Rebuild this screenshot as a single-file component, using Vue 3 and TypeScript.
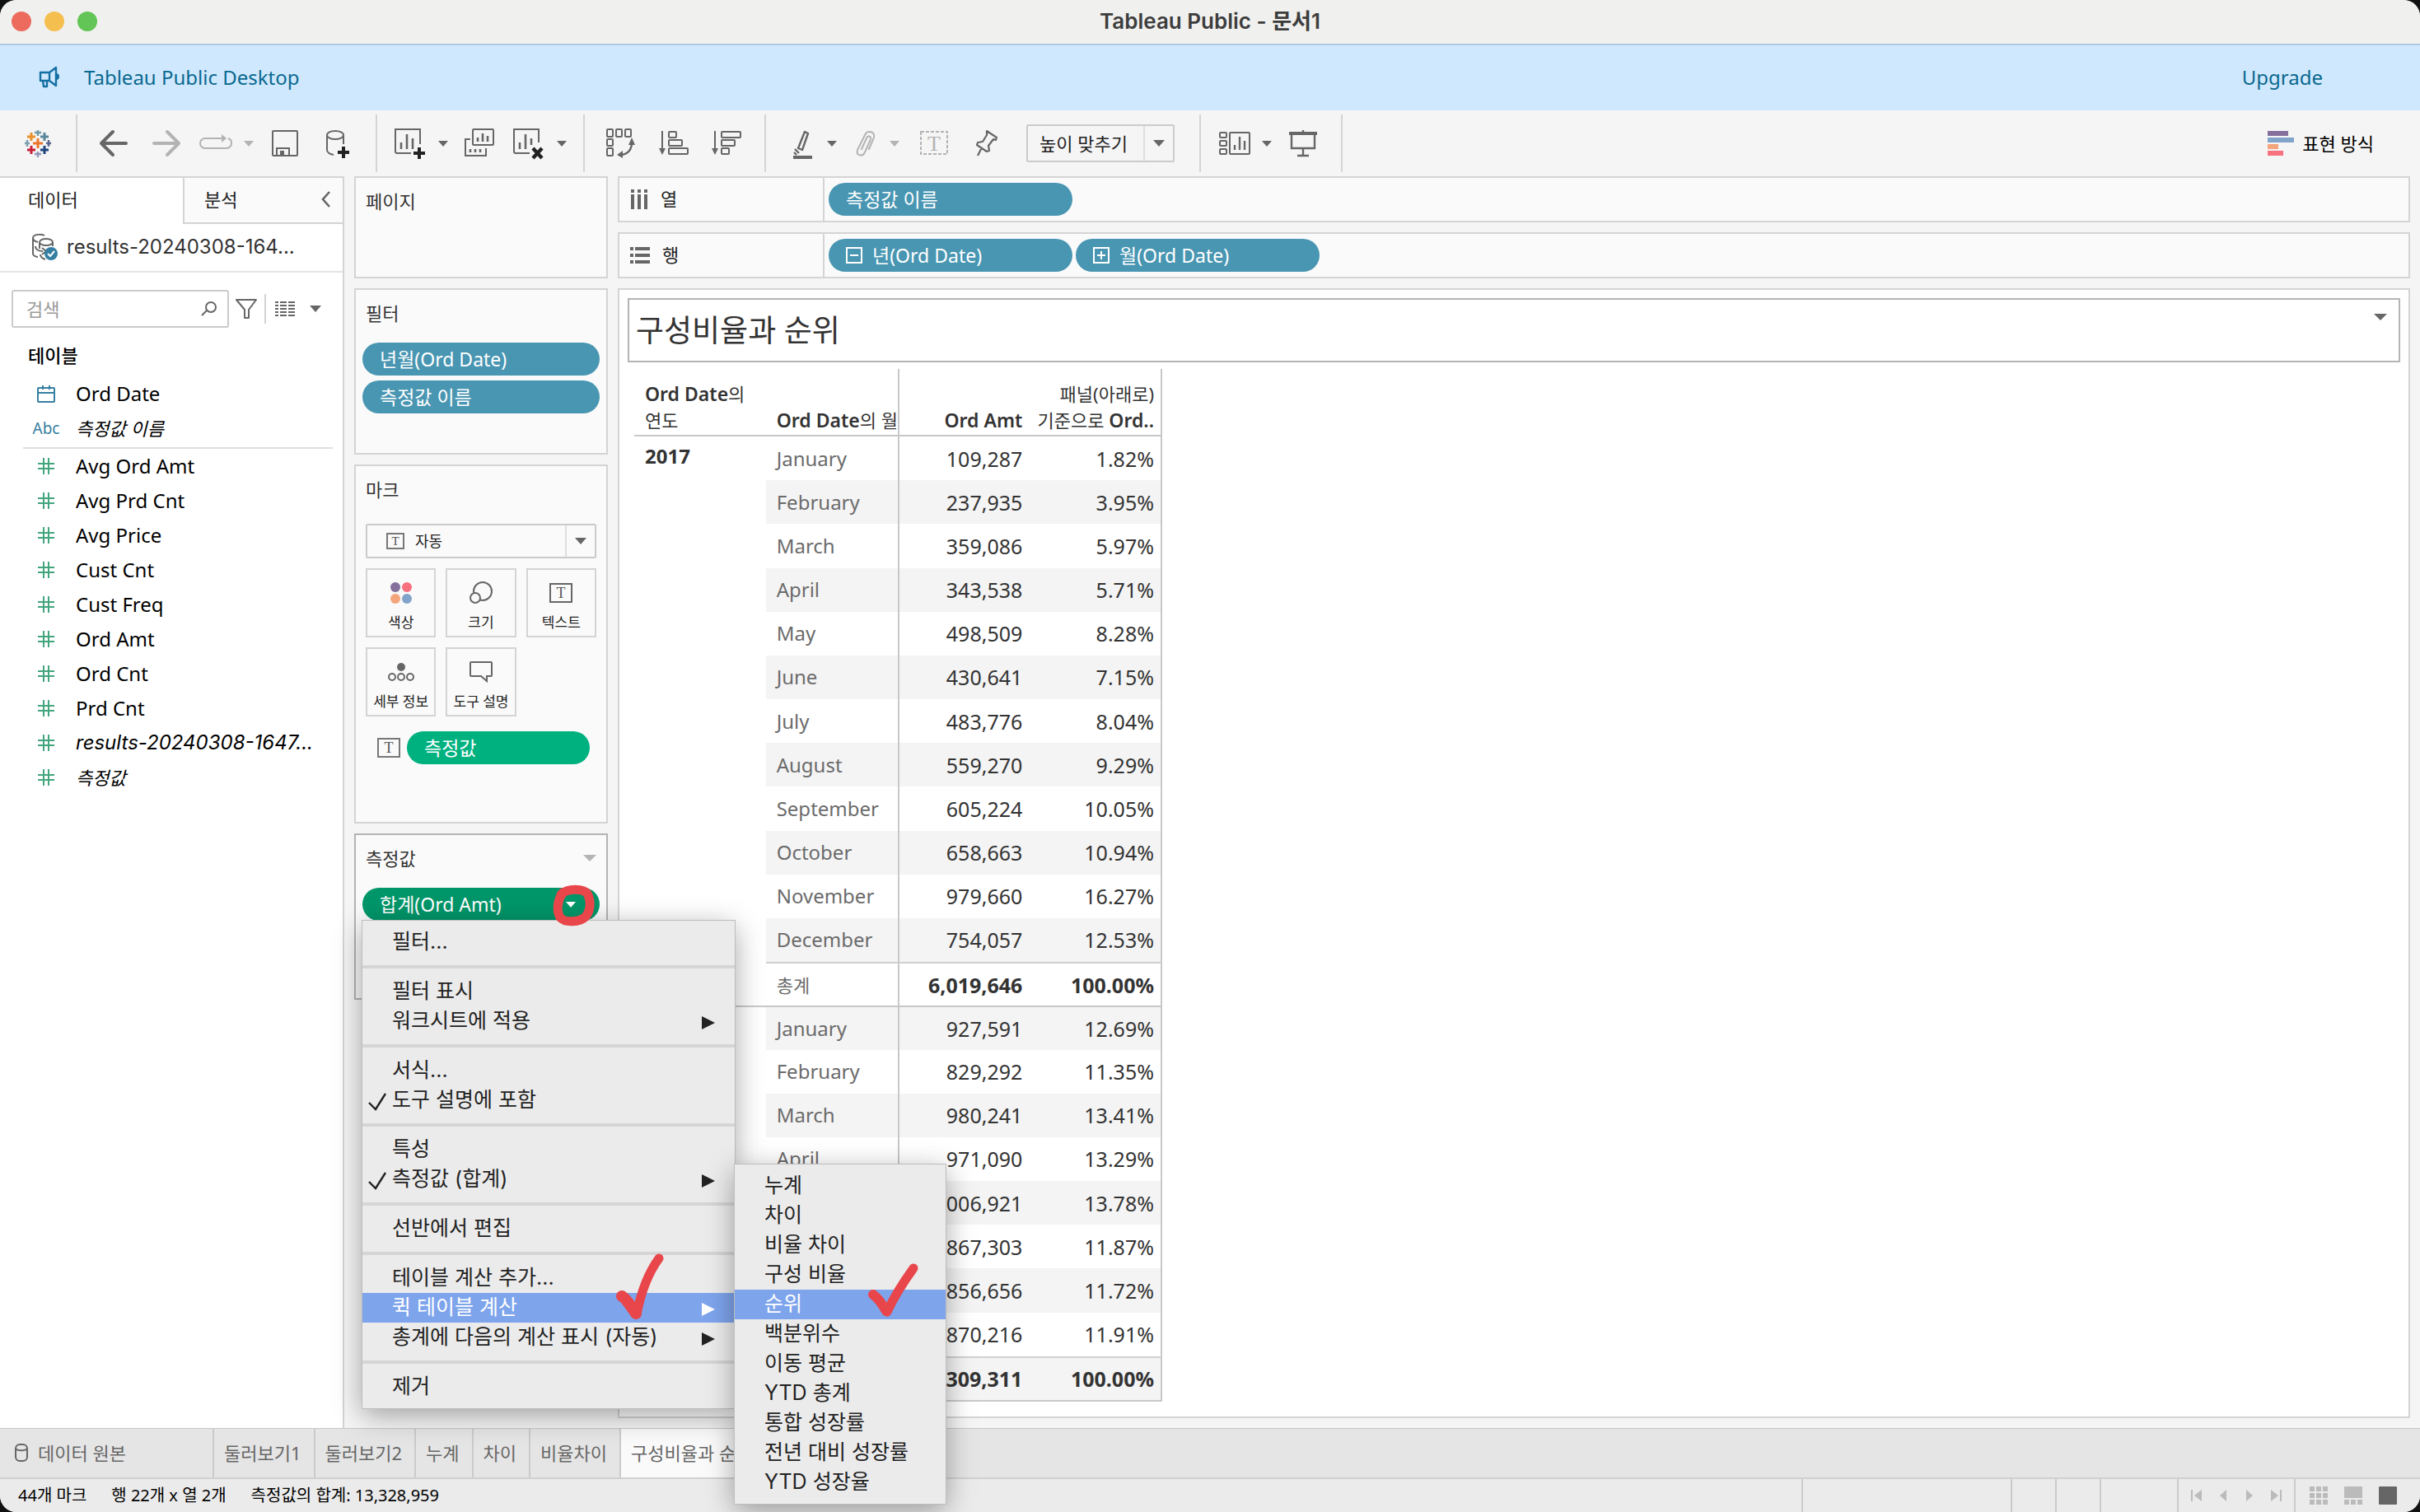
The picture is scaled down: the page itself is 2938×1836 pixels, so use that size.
<script setup lang="ts">
import { ref } from 'vue'

interface Field {
  name: string
  kind: 'date' | 'text' | 'number'
  italic?: boolean
  latin?: boolean
}

interface MenuItem {
  label: string
  checked?: boolean
  submenu?: boolean
  active?: boolean
}

interface Row {
  month: string
  amount: string
  share: string
  total?: boolean
}

interface YearBlock {
  year: string
  rows: Row[]
}

const search = ref('')
const fit = ref('height')
const markType = ref('auto')

const dimensions: Field[] = [
  { name: 'Ord Date', kind: 'date' },
  { name: '측정값 이름', kind: 'text', italic: true },
]

const measures: Field[] = [
  { name: 'Avg Ord Amt', kind: 'number' },
  { name: 'Avg Prd Cnt', kind: 'number' },
  { name: 'Avg Price', kind: 'number' },
  { name: 'Cust Cnt', kind: 'number' },
  { name: 'Cust Freq', kind: 'number' },
  { name: 'Ord Amt', kind: 'number' },
  { name: 'Ord Cnt', kind: 'number' },
  { name: 'Prd Cnt', kind: 'number' },
  { name: 'results-20240308-1647...', kind: 'number', italic: true, latin: true },
  { name: '측정값', kind: 'number', italic: true },
]

const menuGroups: MenuItem[][] = [
  [{ label: '필터...' }],
  [{ label: '필터 표시' }, { label: '워크시트에 적용', submenu: true }],
  [{ label: '서식...' }, { label: '도구 설명에 포함', checked: true }],
  [{ label: '특성' }, { label: '측정값 (합계)', checked: true, submenu: true }],
  [{ label: '선반에서 편집' }],
  [
    { label: '테이블 계산 추가...' },
    { label: '퀵 테이블 계산', submenu: true, active: true },
    { label: '총계에 다음의 계산 표시 (자동)', submenu: true },
  ],
  [{ label: '제거' }],
]

const quickCalcs: MenuItem[] = [
  { label: '누계' },
  { label: '차이' },
  { label: '비율 차이' },
  { label: '구성 비율' },
  { label: '순위', active: true },
  { label: '백분위수' },
  { label: '이동 평균' },
  { label: 'YTD 총계' },
  { label: '통합 성장률' },
  { label: '전년 대비 성장률' },
  { label: 'YTD 성장율' },
]

const years: YearBlock[] = [
  {
    year: '2017',
    rows: [
      { month: 'January', amount: '109,287', share: '1.82%' },
      { month: 'February', amount: '237,935', share: '3.95%' },
      { month: 'March', amount: '359,086', share: '5.97%' },
      { month: 'April', amount: '343,538', share: '5.71%' },
      { month: 'May', amount: '498,509', share: '8.28%' },
      { month: 'June', amount: '430,641', share: '7.15%' },
      { month: 'July', amount: '483,776', share: '8.04%' },
      { month: 'August', amount: '559,270', share: '9.29%' },
      { month: 'September', amount: '605,224', share: '10.05%' },
      { month: 'October', amount: '658,663', share: '10.94%' },
      { month: 'November', amount: '979,660', share: '16.27%' },
      { month: 'December', amount: '754,057', share: '12.53%' },
      { month: '총계', amount: '6,019,646', share: '100.00%', total: true },
    ],
  },
  {
    year: '2018',
    rows: [
      { month: 'January', amount: '927,591', share: '12.69%' },
      { month: 'February', amount: '829,292', share: '11.35%' },
      { month: 'March', amount: '980,241', share: '13.41%' },
      { month: 'April', amount: '971,090', share: '13.29%' },
      { month: 'May', amount: '1,006,921', share: '13.78%' },
      { month: 'June', amount: '867,303', share: '11.87%' },
      { month: 'July', amount: '856,656', share: '11.72%' },
      { month: 'August', amount: '870,216', share: '11.91%' },
      { month: '총계', amount: '7,309,311', share: '100.00%', total: true },
    ],
  },
]

const isStriped = (block: number, row: number): boolean =>
  (block === 0 ? row : years[0].rows.length + row) % 2 === 1

const sheets: string[] = ['둘러보기1', '둘러보기2', '누계', '차이', '비율차이', '구성비율과 순위']
const activeSheet = ref('구성비율과 순위')
</script>

<template>
  <div class="window">
    <header class="titlebar">
      <div class="lights">
        <button class="light red" aria-label="닫기"></button>
        <button class="light yellow" aria-label="최소화"></button>
        <button class="light green" aria-label="확대"></button>
      </div>
      <h1>Tableau Public - 문서1</h1>
    </header>

    <div class="banner">
      <svg class="megaphone" viewBox="0 0 28 28" width="28" height="28">
        <path d="M3 8h11l8-6v22l-8-6H3zM14 8v10M6 18h5v7H7z" fill="none" stroke="#1470a3" stroke-width="2.4" stroke-linejoin="round" />
        <path d="M22 9a4 4 0 0 1 0 8z" fill="#1470a3" />
      </svg>
      <span>Tableau Public Desktop</span>
      <a class="upgrade" href="#upgrade">Upgrade</a>
    </div>

    <nav class="toolbar" aria-label="도구 모음">
      <div class="group logo-group">
        <button class="tool" aria-label="시작 페이지">
          <svg viewBox="0 0 40 40" width="40" height="40" fill="none" stroke-width="3">
            <path d="M20 14v12M14 20h12" stroke="#eb762d" />
            <path d="M20 4v7M16 7h8" stroke="#7199a6" stroke-width="2.4" />
            <path d="M20 30v7M16 33h8" stroke="#9198b8" stroke-width="2.4" />
            <path d="M7 16v8M4 20h6" stroke="#7b9fae" stroke-width="2.4" />
            <path d="M33 16v8M30 20h6" stroke="#5b6591" stroke-width="2.4" />
            <path d="M12 7v10M7 12h10" stroke="#eb912c" />
            <path d="M28 7v10M23 12h10" stroke="#59879b" />
            <path d="M12 23v10M7 28h10" stroke="#c72037" />
            <path d="M28 23v10M23 28h10" stroke="#1f447e" />
          </svg>
        </button>
      </div>

      <div class="group">
        <button class="tool" aria-label="실행 취소">
          <svg viewBox="0 0 40 40" width="40" height="40" fill="none" stroke="#666" stroke-width="4" stroke-linecap="round" stroke-linejoin="round">
            <path d="M19 6L5 20l14 14M5 20h30" />
          </svg>
        </button>
        <button class="tool" aria-label="다시 실행">
          <svg viewBox="0 0 40 40" width="40" height="40" fill="none" stroke="#b3b3b3" stroke-width="4" stroke-linecap="round" stroke-linejoin="round">
            <path d="M21 6l14 14-14 14M35 20H5" />
          </svg>
        </button>
        <div class="split">
          <button class="tool" aria-label="반복">
            <svg viewBox="0 0 40 40" width="40" height="40" fill="none" stroke="#b3b3b3" stroke-width="2">
              <path d="M28 14H7a6 6 0 0 0-6 6 6 6 0 0 0 6 6h26a6 6 0 0 0 6-6 6 6 0 0 0-4-6" />
              <path d="M27 9l6 5-6 5z" fill="#b3b3b3" stroke="none" />
            </svg>
          </button>
          <button class="caret-btn" aria-label="반복 옵션"><span class="caret light-caret"></span></button>
        </div>
        <button class="tool" aria-label="저장">
          <svg viewBox="0 0 40 40" width="40" height="40" fill="none" stroke="#666" stroke-width="2">
            <rect x="5" y="5" width="30" height="30" rx="1" />
            <path d="M10 35v-9h15v9" />
            <path d="M14 29h5v6h-5z" fill="#666" stroke="none" />
          </svg>
        </button>
        <button class="tool" aria-label="새 데이터 원본">
          <svg viewBox="0 0 40 40" width="40" height="40" fill="none" stroke="#666" stroke-width="2">
            <ellipse cx="17" cy="10" rx="10" ry="5" />
            <path d="M7 10v18c0 3 3 5 8 6M27 10v11" />
            <path d="M27 24v14M20 31h14" stroke="#222" stroke-width="4" />
          </svg>
        </button>
      </div>

      <div class="group">
        <div class="split">
          <button class="tool" aria-label="새 워크시트">
            <svg viewBox="0 0 40 40" width="40" height="40" fill="none" stroke="#666" stroke-width="2">
              <path d="M21 32H4a2 2 0 0 1-2-2V3h30v18" />
              <path d="M9 19v8M16 9v18M23 14v13" stroke-width="2.6" />
              <path d="M31 25v14M24 32h14" stroke="#222" stroke-width="4" />
            </svg>
          </button>
          <button class="caret-btn" aria-label="새로 만들기 옵션"><span class="caret"></span></button>
        </div>
        <button class="tool" aria-label="복제">
          <svg viewBox="0 0 40 40" width="40" height="40" fill="none" stroke="#666" stroke-width="2">
            <rect x="12" y="3" width="25" height="19" rx="1" />
            <path d="M9 15H3v20h25v-9" />
            <path d="M18 13v5M24 8v10M30 11v7" stroke-width="2.6" />
            <path d="M9 27v4M15 27v4M21 27v4" stroke-width="2.6" />
          </svg>
        </button>
        <div class="split">
          <button class="tool" aria-label="지우기">
            <svg viewBox="0 0 40 40" width="40" height="40" fill="none" stroke="#666" stroke-width="2">
              <path d="M21 32H4a2 2 0 0 1-2-2V3h30v16" />
              <path d="M9 19v8M16 9v18M23 14v8" stroke-width="2.6" />
              <path d="M25 26l11 12M36 26L25 38" stroke="#222" stroke-width="4.4" />
            </svg>
          </button>
          <button class="caret-btn" aria-label="지우기 옵션"><span class="caret"></span></button>
        </div>
      </div>

      <div class="group">
        <button class="tool" aria-label="행과 열 바꾸기">
          <svg viewBox="0 0 40 40" width="40" height="40" fill="none" stroke="#666" stroke-width="2">
            <rect x="3" y="3" width="7" height="9" rx="1" />
            <rect x="14" y="3" width="7" height="9" rx="1" />
            <rect x="25" y="3" width="7" height="9" rx="1" />
            <rect x="3" y="15" width="7" height="8" rx="1" />
            <rect x="3" y="26" width="7" height="9" rx="1" />
            <path d="M33 19c0 9-5 14-13 15" stroke-width="2.4" />
            <path d="M33 13l4 9h-8zM15 34l7-5v9z" fill="#666" stroke="none" />
          </svg>
        </button>
        <button class="tool" aria-label="오름차순 정렬">
          <svg viewBox="0 0 40 40" width="40" height="40" fill="none" stroke="#666" stroke-width="2">
            <path d="M6 5v22" />
            <path d="M2 26h8l-4 8z" fill="#666" stroke="none" />
            <rect x="14" y="6" width="9" height="7" rx="1" />
            <rect x="14" y="16" width="16" height="7" rx="1" />
            <rect x="14" y="26" width="23" height="7" rx="1" />
          </svg>
        </button>
        <button class="tool" aria-label="내림차순 정렬">
          <svg viewBox="0 0 40 40" width="40" height="40" fill="none" stroke="#666" stroke-width="2">
            <path d="M6 5v22" />
            <path d="M2 26h8l-4 8z" fill="#666" stroke="none" />
            <rect x="14" y="6" width="23" height="7" rx="1" />
            <rect x="14" y="16" width="16" height="7" rx="1" />
            <rect x="14" y="26" width="9" height="7" rx="1" />
          </svg>
        </button>
      </div>

      <div class="group wide-group">
        <div class="split narrow">
          <button class="tool" aria-label="하이라이트">
            <svg viewBox="0 0 40 40" width="40" height="40" fill="none" stroke="#666" stroke-width="2.4">
              <path d="M23 6l4 2-7 20-5-2z" stroke-linejoin="round" />
              <path d="M11 27l5 5M10 31l3 3" />
              <path d="M9 37h23" stroke-width="4" />
            </svg>
          </button>
          <button class="caret-btn" aria-label="하이라이트 옵션"><span class="caret"></span></button>
        </div>
        <div class="split narrow">
          <button class="tool" aria-label="그룹">
            <svg viewBox="0 0 40 40" width="40" height="40" fill="none" stroke="#b3b3b3" stroke-width="2" stroke-linecap="round">
              <path d="M25 27l6-14c2-7-8-10-11-3l-9 18c-2 7 6 9 9 3l7-16c1-4-4-5-5-1l-6 13" />
            </svg>
          </button>
          <button class="caret-btn" aria-label="그룹 옵션"><span class="caret light-caret"></span></button>
        </div>
        <button class="tool" aria-label="마크 레이블">
          <svg viewBox="0 0 40 40" width="40" height="40" fill="none" stroke="#b3b3b3">
            <rect x="4" y="6" width="32" height="27" stroke-width="2" stroke-dasharray="4 2" />
            <text x="20" y="29" text-anchor="middle" class="serif-t" font-size="26" fill="#b3b3b3" stroke="none">T</text>
          </svg>
        </button>
        <button class="tool" aria-label="고정">
          <svg viewBox="0 0 40 40" width="40" height="40" fill="none" stroke="#666" stroke-width="2.2" stroke-linejoin="round">
            <path d="M20 5l12 8-1 3-3-1-6 8 1 6-3 1-12-8 1-3 6-1 5-8zM14 25l-5 10" />
          </svg>
        </button>
        <div class="select-box fit-box">
          <select v-model="fit" aria-label="맞춤">
            <option value="height">높이 맞추기</option>
          </select>
          <span class="select-caret"><span class="caret big-caret"></span></span>
        </div>
      </div>

      <div class="group">
        <div class="split">
          <button class="tool" aria-label="카드 표시">
            <svg viewBox="0 0 40 40" width="40" height="40" fill="none" stroke="#666" stroke-width="2">
              <rect x="3" y="7" width="8" height="6" rx="1" />
              <rect x="3" y="17" width="8" height="6" rx="1" />
              <rect x="3" y="27" width="8" height="6" rx="1" />
              <rect x="15" y="7" width="24" height="26" rx="1" />
              <path d="M21 22v6M27 12v16M33 17v11" stroke-width="2.4" />
            </svg>
          </button>
          <button class="caret-btn" aria-label="카드 옵션"><span class="caret"></span></button>
        </div>
        <button class="tool" aria-label="프레젠테이션 모드">
          <svg viewBox="0 0 40 40" width="40" height="40" fill="none" stroke="#666" stroke-width="2">
            <path d="M3 8h34" stroke-width="4" />
            <path d="M6 10v16h28V10M20 4v3M20 26v9M13 35h14" stroke-width="2.4" />
          </svg>
        </button>
      </div>

      <button class="show-me">
        <svg viewBox="0 0 32 30" width="32" height="30">
          <rect width="25" height="6" fill="#84709b" />
          <rect y="8" width="32" height="6" fill="#82a4ca" />
          <rect y="16" width="13" height="6" fill="#f4a57b" />
          <rect y="24" width="19" height="6" fill="#f8717f" />
        </svg>
        표현 방식
      </button>
    </nav>

    <main class="workspace">
      <aside class="data-pane">
        <div class="pane-tabs">
          <button class="pane-tab current">데이터</button>
          <button class="pane-tab other">
            분석
            <svg viewBox="0 0 12 20" width="12" height="20" fill="none" stroke="#666" stroke-width="2.6"><path d="M10 1L2 10l8 9" /></svg>
          </button>
        </div>
        <button class="source">
          <svg viewBox="0 0 34 34" width="34" height="34" fill="none" stroke="#666" stroke-width="2">
            <path d="M17 3c-3-2-14-2-14 3v19c0 2 3 4 6 4M3 6c0 3 2 4 6 5" />
            <ellipse cx="19" cy="11" rx="8" ry="4" />
            <path d="M11 11v8M27 11v5M6 16c0 4 4 6 9 6M12 26c0 3 3 5 6 6" />
            <path d="M14 18l5 4-5 4" />
            <circle cx="25" cy="25" r="8" fill="#357fa2" stroke="none" />
            <path d="M21 25l3 3 5-6" stroke="#fff" />
          </svg>
          results-20240308-164...
        </button>
        <div class="search-row">
          <label class="search">
            <input v-model="search" type="text" placeholder="검색" aria-label="검색" />
            <svg viewBox="0 0 20 20" width="20" height="20" fill="none" stroke="#666" stroke-width="2"><circle cx="12" cy="8" r="6" /><path d="M7 12l-6 6" /></svg>
          </label>
          <button class="bare filter-btn" aria-label="필터">
            <svg viewBox="0 0 26 26" width="26" height="26" fill="none" stroke="#666" stroke-width="2" stroke-linejoin="round"><path d="M1 2h24L16 14v10h-5V14z" /></svg>
          </button>
          <button class="bare view-btn" aria-label="보기">
            <svg viewBox="0 0 24 20" width="24" height="20" stroke="#666" stroke-width="2">
              <path d="M0 2h4M6 2h8M16 2h8M0 6h4M6 6h8M16 6h8M0 10h4M6 10h8M16 10h8M0 14h4M6 14h8M16 14h8M0 18h4M6 18h8M16 18h8" />
            </svg>
            <span class="caret big-caret"></span>
          </button>
        </div>
        <h2>테이블</h2>
        <ul class="fields dims">
          <li v-for="field in dimensions" :key="field.name">
            <span class="field-icon">
              <svg v-if="field.kind === 'date'" viewBox="0 0 22 22" width="22" height="22" fill="none" stroke="#357fa2" stroke-width="2"><rect x="1" y="4" width="20" height="17" rx="1" /><path d="M1 10h20M7 1v5M15 1v5" /></svg>
              <span v-else class="abc">Abc</span>
            </span>
            <span :class="{ italic: field.italic }">{{ field.name }}</span>
          </li>
        </ul>
        <ul class="fields">
          <li v-for="field in measures" :key="field.name">
            <span class="field-icon">
              <svg viewBox="0 0 20 20" width="20" height="20" stroke="#42a57d" stroke-width="2"><path d="M7 0v20M13 0v20M0 7h20M0 13h20" /></svg>
            </span>
            <span :class="{ italic: field.italic, latin: field.latin }">{{ field.name }}</span>
          </li>
        </ul>
      </aside>

      <section class="cards">
        <div class="card pages"><h3>페이지</h3></div>
        <div class="card filters">
          <h3>필터</h3>
          <button class="pill blue">년월(Ord Date)</button>
          <button class="pill blue">측정값 이름</button>
        </div>
        <div class="card marks">
          <h3>마크</h3>
          <div class="select-box mark-box">
            <svg viewBox="0 0 22 20" width="22" height="20" fill="none" stroke="#777" stroke-width="2">
              <rect x="1" y="1" width="20" height="18" />
              <text x="11" y="15" text-anchor="middle" class="serif-t" font-size="15" fill="#555" stroke="none">T</text>
            </svg>
            <select v-model="markType" aria-label="마크 유형">
              <option value="auto">자동</option>
            </select>
            <span class="select-caret"><span class="caret big-caret"></span></span>
          </div>
          <div class="mark-grid">
            <button class="mark">
              <svg viewBox="0 0 28 28" width="28" height="28"><circle cx="7" cy="7" r="6" fill="#84709b" /><circle cx="21" cy="7" r="6" fill="#f8717f" /><circle cx="7" cy="21" r="6" fill="#f4a57b" /><circle cx="21" cy="21" r="6" fill="#82a4ca" /></svg>
              색상
            </button>
            <button class="mark">
              <svg viewBox="0 0 28 28" width="28" height="28" fill="none" stroke="#666" stroke-width="2"><circle cx="16" cy="12" r="11" /><circle cx="7" cy="20" r="6" fill="#fafafa" /></svg>
              크기
            </button>
            <button class="mark">
              <svg viewBox="0 0 28 28" width="28" height="28" fill="none" stroke="#666" stroke-width="2"><rect x="1" y="3" width="26" height="22" /><text x="14" y="20" text-anchor="middle" class="serif-t" font-size="18" fill="#555" stroke="none">T</text></svg>
              텍스트
            </button>
            <button class="mark">
              <svg viewBox="0 0 32 28" width="32" height="28" fill="none" stroke="#666" stroke-width="2"><circle cx="16" cy="8" r="5" fill="#666" stroke="none" /><circle cx="5" cy="20" r="4" /><circle cx="16" cy="20" r="4" /><circle cx="27" cy="20" r="4" /></svg>
              세부 정보
            </button>
            <button class="mark">
              <svg viewBox="0 0 28 28" width="28" height="28" fill="none" stroke="#666" stroke-width="2"><path d="M2 2h24a1 1 0 0 1 1 1v15a1 1 0 0 1-1 1h-5v6l-7-6H2a1 1 0 0 1-1-1V3a1 1 0 0 1 1-1z" /></svg>
              도구 설명
            </button>
          </div>
          <div class="mark-pill">
            <svg viewBox="0 0 28 24" width="28" height="24" fill="none" stroke="#777" stroke-width="2"><rect x="1" y="1" width="26" height="22" /><text x="14" y="18" text-anchor="middle" class="serif-t" font-size="18" fill="#555" stroke="none">T</text></svg>
            <button class="pill green">측정값</button>
          </div>
        </div>
        <div class="card values">
          <div class="values-head">
            <h3>측정값</h3>
            <span class="caret wide-caret"></span>
          </div>
          <div class="open-pill">
            <button class="pill dark-green" aria-haspopup="menu" aria-expanded="true">
              합계(Ord Amt)
              <span class="caret white-caret"></span>
            </button>
            <div class="menu main-menu" role="menu">
              <ul v-for="(group, g) in menuGroups" :key="g">
                <li v-for="item in group" :key="item.label">
                  <button role="menuitem" :class="{ active: item.active }">
                    <svg v-if="item.checked" class="check" viewBox="0 0 24 24" width="24" height="24" fill="none" stroke="#222" stroke-width="2.4"><path d="M2 13l8 8L22 2" /></svg>
                    {{ item.label }}
                    <svg v-if="item.submenu" class="arrow" viewBox="0 0 16 16" width="16" height="16" fill="currentColor"><path d="M0 0l16 8-16 8z" /></svg>
                  </button>
                  <template v-if="item.active">
                    <svg class="scribble first-tick" viewBox="0 0 64 88" width="64" height="88" fill="none" stroke="#e8464b" stroke-linecap="round" stroke-linejoin="round">
                      <path d="M11 54q4 1 17 21" stroke-width="14" />
                      <path d="M29 76q8-42 27-68" stroke-width="11" />
                    </svg>
                    <div class="menu sub-menu" role="menu">
                      <ul>
                        <li v-for="calc in quickCalcs" :key="calc.label">
                          <button role="menuitem" :class="{ active: calc.active }">{{ calc.label }}</button>
                          <svg v-if="calc.active" class="scribble second-tick" viewBox="0 0 68 72" width="68" height="72" fill="none" stroke="#e8464b" stroke-linecap="round" stroke-linejoin="round">
                            <path d="M10 41q8 6 16 20" stroke-width="12" />
                            <path d="M27 62Q38 38 59 9" stroke-width="11" />
                          </svg>
                        </li>
                      </ul>
                    </div>
                  </template>
                </li>
              </ul>
            </div>
            <svg class="scribble ring" viewBox="0 0 56 56" width="56" height="56" fill="none" stroke="#e8464b">
              <path d="M13 14C22 6 40 7 45 13c5 9 4 21-2 28-7 7-25 8-31 1-5-9-3-21 3-30" stroke-width="11" stroke-linecap="round" stroke-linejoin="round" />
            </svg>
          </div>
        </div>
      </section>

      <section class="canvas">
        <div class="shelf">
          <div class="shelf-name">
            <svg viewBox="0 0 22 24" width="22" height="24" stroke="#666" stroke-width="4"><path d="M3 0v4M11 0v4M19 0v4M3 6v18M11 6v18M19 6v18" /></svg>
            <span>열</span>
          </div>
          <div class="shelf-pills"><button class="pill blue">측정값 이름</button></div>
        </div>
        <div class="shelf">
          <div class="shelf-name">
            <svg viewBox="0 0 24 22" width="24" height="22" stroke="#666" stroke-width="4"><path d="M0 3h4M0 11h4M0 19h4M6 3h18M6 11h18M6 19h18" /></svg>
            <span>행</span>
          </div>
          <div class="shelf-pills">
            <button class="pill blue">
              <svg viewBox="0 0 20 20" width="20" height="20" fill="none" stroke="#fff" stroke-width="2"><path d="M1 1h18v18H1zM5 10h10" /></svg>
              년(Ord Date)
            </button>
            <button class="pill blue">
              <svg viewBox="0 0 20 20" width="20" height="20" fill="none" stroke="#fff" stroke-width="2"><path d="M1 1h18v18H1zM5 10h10M10 5v10" /></svg>
              월(Ord Date)
            </button>
          </div>
        </div>
        <div class="viz">
          <div class="viz-title">
            <h2>구성비율과 순위</h2>
            <span class="caret wide-caret dark-caret"></span>
          </div>
          <div class="table-area">
            <table>
              <colgroup><col /><col class="month-col" /><col /><col /></colgroup>
              <thead>
                <tr>
                  <th scope="col"><b>Ord Date</b>의<br />연도</th>
                  <th scope="col" class="month-head"><b>Ord Date</b>의 월</th>
                  <th scope="col" class="num"><b>Ord Amt</b></th>
                  <th scope="col" class="num last">패널(아래로)<br />기준으로 <b>Ord..</b></th>
                </tr>
              </thead>
              <tbody v-for="(block, b) in years" :key="block.year">
                <tr v-for="(row, r) in block.rows" :key="row.month" :class="{ striped: isStriped(b, r), total: row.total }">
                  <th v-if="r === 0" scope="rowgroup" class="year" :rowspan="block.rows.length">{{ block.year }}</th>
                  <th scope="row" class="month">{{ row.month }}</th>
                  <td>{{ row.amount }}</td>
                  <td class="last">{{ row.share }}</td>
                </tr>
              </tbody>
            </table>
          </div>
        </div>
      </section>
    </main>

    <nav class="sheet-tabs" aria-label="시트">
      <button class="sheet source-tab">
        <svg viewBox="0 0 16 22" width="16" height="22" fill="none" stroke="#666" stroke-width="2"><rect x="1" y="1" width="14" height="20" rx="5" /><path d="M1 6c2 3 12 3 14 0" /></svg>
        데이터 원본
      </button>
      <button v-for="sheet in sheets" :key="sheet" class="sheet" :class="{ open: sheet === activeSheet }" @click="activeSheet = sheet">{{ sheet }}</button>
    </nav>

    <footer class="status">
      <span class="stat">44개 마크</span>
      <span class="stat">행 22개  x  열 2개</span>
      <span class="stat">측정값의 합계: 13,328,959</span>
      <div class="status-cells">
        <span class="cell wide"></span>
        <span class="cell"></span>
        <span class="cell"></span>
        <span class="cell medium"></span>
        <div class="cell pager">
          <button class="bare" aria-label="처음"><svg viewBox="0 0 14 14" width="14" height="14" fill="#bbb"><path d="M0 0h2v14H0zM13 0v14L4 7z" /></svg></button>
          <button class="bare" aria-label="이전"><svg viewBox="0 0 14 14" width="14" height="14" fill="#bbb"><path d="M11 0v14L3 7z" /></svg></button>
          <button class="bare" aria-label="다음"><svg viewBox="0 0 14 14" width="14" height="14" fill="#bbb"><path d="M3 0v14l8-7z" /></svg></button>
          <button class="bare" aria-label="마지막"><svg viewBox="0 0 14 14" width="14" height="14" fill="#bbb"><path d="M12 0h2v14h-2zM1 0v14l9-7z" /></svg></button>
        </div>
        <div class="cell views">
          <button class="bare" aria-label="시트 정렬기">
            <svg viewBox="0 0 22 22" width="22" height="22" fill="#bbb"><path d="M0 0h6v6H0zM8 0h6v6H8zM16 0h6v6h-6zM0 8h6v6H0zM8 8h6v6H8zM16 8h6v6h-6zM0 16h6v6H0zM8 16h6v6H8zM16 16h6v6h-6z" /></svg>
          </button>
          <button class="bare" aria-label="필름 스트립"><svg viewBox="0 0 22 22" width="22" height="22" fill="#bbb"><path d="M0 0h22v14H0zM0 16h6v6H0zM8 16h6v6H8zM16 16h6v6h-6z" /></svg></button>
          <button class="bare" aria-label="탭"><svg viewBox="0 0 22 22" width="22" height="22" fill="#666"><rect width="22" height="22" rx="1" /></svg></button>
        </div>
      </div>
    </footer>
  </div>
</template>

<style>
body {
  background: #111;
}
</style>

<style scoped>
* {
  box-sizing: border-box;
}
.window {
  display: flex;
  flex-direction: column;
  height: 100vh;
  overflow: hidden;
  border-radius: 20px;
  background: #f5f5f5;
  color: #222;
  font-family: "Noto Sans", "Noto Sans CJK KR", sans-serif;
  font-size: 22px;
  line-height: 32px;
}
button,
select,
input {
  margin: 0;
  padding: 0;
  border: 0;
  background: none;
  color: inherit;
  font: inherit;
}
button {
  text-align: left;
}
svg {
  display: block;
  flex: none;
}
h1,
h2,
h3,
ul {
  margin: 0;
  padding: 0;
  list-style: none;
  font-weight: 400;
}
.bare {
  display: flex;
  align-items: center;
}
.serif-t {
  font-family: "Liberation Serif", serif;
}

/* carets */
.caret {
  display: block;
  flex: none;
  width: 0;
  border: 6px solid transparent;
  border-top: 7px solid #666;
  border-bottom: 0;
}
.light-caret {
  border-top-color: #b3b3b3;
}
.big-caret {
  border-width: 8px 7px 0;
}
.wide-caret {
  border-width: 8px 8px 0;
  border-top-color: #b4b4b4;
}
.dark-caret {
  border-top-color: #666;
}
.white-caret {
  border-top-color: #fff;
}

/* title bar */
.titlebar {
  display: flex;
  flex: none;
  align-items: center;
  height: 55px;
  padding-bottom: 2px;
  border-bottom: 2px solid #b0cbe0;
  background: #f0f0ee;
}
.lights {
  display: flex;
  flex: 1;
  gap: 16px;
  padding-left: 14px;
}
.titlebar::after {
  flex: 1;
  padding-right: 14px;
  content: "";
}
.light {
  width: 24px;
  height: 24px;
  border-radius: 50%;
}
.red {
  background: #ed6a5f;
}
.yellow {
  background: #f5bf4f;
}
.green.light {
  background: #62c555;
}
h1 {
  color: #3d3d3d;
  font-family: Inter, "Noto Sans CJK KR", sans-serif;
  font-size: 26px;
  font-weight: 600;
}

/* banner */
.banner {
  display: flex;
  flex: none;
  align-items: center;
  height: 79px;
  padding: 0 118px 2px 46px;
  background: #cfe8fd;
  color: #0b6890;
  font-size: 24px;
}
.megaphone {
  margin-right: 28px;
}
.upgrade {
  margin-left: auto;
  color: inherit;
  text-decoration: none;
}

/* toolbar */
.toolbar {
  display: flex;
  flex: none;
  align-items: center;
  height: 80px;
}
.group {
  display: flex;
  align-items: center;
  height: 70px;
  padding: 0 14px 0 12px;
  border-right: 2px solid #d4d4d4;
}
.logo-group {
  padding: 0 14px;
}
.wide-group {
  padding: 0 30px 0 20px;
}
.tool {
  display: flex;
  justify-content: center;
  width: 64px;
}
.split {
  display: flex;
  align-items: center;
}
.split .tool {
  width: 56px;
}
.narrow {
  margin-right: 4px;
}
.narrow .tool {
  width: 48px;
}
.caret-btn {
  display: flex;
  justify-content: center;
  width: 24px;
}
.select-box {
  display: flex;
  align-items: center;
  border: 2px solid #cbcbcb;
  border-radius: 2px;
}
.select-box select {
  flex: 1;
  min-width: 0;
  height: 32px;
  appearance: none;
}
.select-caret {
  display: flex;
  align-self: stretch;
  align-items: center;
  justify-content: center;
  width: 36px;
  border-left: 2px solid #dedede;
}
.fit-box {
  width: 180px;
  height: 46px;
  margin-left: 16px;
  padding-left: 14px;
}
.show-me {
  display: flex;
  gap: 10px;
  align-items: center;
  margin-left: auto;
  padding-right: 56px;
  color: #000;
}

/* workspace */
.workspace {
  display: flex;
  flex: 1;
  gap: 12px;
  min-height: 0;
  padding-right: 12px;
}
.data-pane {
  flex: none;
  width: 418px;
  border-top: 2px solid #d4d4d4;
  border-right: 2px solid #d4d4d4;
  background: #fff;
}
.pane-tabs {
  display: flex;
  height: 56px;
}
.pane-tab {
  padding: 0 0 4px 34px;
}
.current {
  width: 222px;
}
.other {
  display: flex;
  flex: 1;
  align-items: center;
  justify-content: space-between;
  padding: 0 14px 2px 24px;
  border-bottom: 2px solid #d4d4d4;
  border-left: 2px solid #d4d4d4;
  background: #fafafa;
}
.source {
  display: flex;
  gap: 10px;
  align-items: center;
  width: 100%;
  height: 59px;
  padding: 0 0 2px 37px;
  border-bottom: 2px solid #e4e4e4;
  color: #333;
  font-family: Inter, sans-serif;
  font-size: 24px;
}
.search-row {
  display: flex;
  align-items: center;
  margin: 21px 0 0 14px;
}
.search {
  display: flex;
  align-items: center;
  width: 264px;
  height: 46px;
  padding: 0 12px 0 16px;
  border: 2px solid #cbcbcb;
  border-radius: 3px;
}
.search input {
  flex: 1;
  min-width: 0;
  outline: none;
}
.search input::placeholder {
  color: #999;
}
.filter-btn {
  height: 36px;
  padding: 0 9px 0 8px;
  border-right: 2px solid #d4d4d4;
}
.view-btn {
  gap: 18px;
  padding-left: 11px;
}
.data-pane h2 {
  margin: 17px 0 10px 34px;
  color: #000;
  font-size: 22px;
  font-weight: 500;
}
.fields {
  margin: 0 12px 0 28px;
  color: #000;
  font-size: 24px;
}
.dims {
  padding-bottom: 2px;
  border-bottom: 2px solid #dedede;
}
.fields li {
  display: flex;
  align-items: center;
  height: 42px;
  white-space: nowrap;
}
.field-icon {
  display: flex;
  flex: none;
  justify-content: center;
  width: 56px;
  margin-right: 8px;
}
.abc {
  color: #357fa2;
  font-size: 19px;
}
.italic {
  font-size: 22px;
  font-style: italic;
}
.italic.latin {
  font-family: Inter, sans-serif;
  font-size: 24px;
}

/* cards */
.cards {
  position: relative;
  z-index: 1;
  display: flex;
  flex: none;
  flex-direction: column;
  gap: 12px;
  width: 308px;
}
.card {
  flex: none;
  padding: 12px 8px;
  border: 2px solid #d4d4d4;
  background: #fafafa;
}
h3 {
  padding-left: 4px;
  color: #333;
  font-size: 22px;
}
.pages {
  height: 124px;
}
.filters {
  height: 202px;
}
.marks {
  height: 436px;
}
.values {
  height: 202px;
  border-color: #b4b4b4;
}
.pill {
  display: flex;
  gap: 12px;
  align-items: center;
  width: 100%;
  height: 40px;
  padding: 0 22px 0 21px;
  border-radius: 20px;
  color: #fff;
  font-size: 23px;
  white-space: nowrap;
}
.blue {
  background: #4996b2;
}
.green {
  background: #00b180;
}
.dark-green {
  justify-content: space-between;
  padding-right: 29px;
  background: #009669;
}
.filters h3 {
  margin-bottom: 20px;
}
.filters .pill {
  margin-bottom: 6px;
}
.mark-box {
  gap: 13px;
  height: 42px;
  margin: 26px 4px 12px;
  padding-left: 23px;
  font-size: 18px;
}
.mark-grid {
  display: grid;
  grid-template-columns: repeat(3, 1fr);
  gap: 12px;
  margin: 0 4px;
}
.mark {
  display: flex;
  flex-direction: column;
  gap: 10px;
  align-items: center;
  height: 84px;
  padding-top: 14px;
  border: 2px solid #d4d4d4;
  font-size: 17px;
  line-height: 24px;
  white-space: nowrap;
}
.mark-pill {
  display: flex;
  gap: 8px;
  align-items: center;
  margin: 18px 12px 0 18px;
}
.values-head {
  display: flex;
  align-items: center;
  justify-content: space-between;
  padding-right: 4px;
}
.open-pill {
  position: relative;
  margin-top: 20px;
}

/* menus */
.menu {
  position: absolute;
  padding: 8px 0;
  background: #ebebeb;
  box-shadow: 0 0 0 1px #bdbdbd, 0 8px 32px rgba(0, 0, 0, 0.36);
  color: #222;
  font-family: Inter, "Noto Sans CJK KR", sans-serif;
  font-size: 25px;
  white-space: nowrap;
}
.main-menu {
  top: 100%;
  left: 0;
  width: 452px;
}
.main-menu > ul + ul {
  margin-top: 10px;
  padding-top: 10px;
  border-top: 4px solid #d5d5d5;
}
.menu li {
  position: relative;
}
.menu button {
  position: relative;
  display: flex;
  align-items: center;
  justify-content: space-between;
  width: 100%;
  height: 36px;
  padding: 0 24px 2px 36px;
}
.menu .active {
  background: #7ea4ec;
  color: #fff;
}
.check {
  position: absolute;
  top: 8px;
  left: 6px;
}
.arrow {
  margin-top: 5px;
}
.sub-menu {
  top: -156px;
  left: 100%;
  width: 256px;
}
.scribble {
  position: absolute;
  z-index: 2;
  pointer-events: none;
}
.first-tick {
  top: -50px;
  left: 304px;
}
.second-tick {
  top: -35px;
  left: 158px;
}
.ring {
  top: -6px;
  right: 4px;
}

/* canvas */
.canvas {
  display: flex;
  flex: 1;
  flex-direction: column;
  gap: 12px;
  min-width: 0;
  padding-bottom: 12px;
}
.shelf {
  display: flex;
  flex: none;
  height: 56px;
  border: 2px solid #d4d4d4;
  background: #fafafa;
}
.shelf-name {
  display: flex;
  gap: 15px;
  align-items: center;
  width: 249px;
  padding-left: 13px;
  border-right: 2px solid #d4d4d4;
}
.shelf-name span {
  padding-bottom: 3px;
}
.shelf-pills {
  display: flex;
  gap: 4px;
  align-items: center;
  padding-left: 5px;
}
.shelf-pills .pill {
  width: 296px;
}
.viz {
  display: flex;
  flex: 1;
  flex-direction: column;
  min-height: 0;
  padding: 10px 10px 18px;
  border: 2px solid #d4d4d4;
  background: #fff;
}
.viz-title {
  display: flex;
  flex: none;
  justify-content: space-between;
  height: 78px;
  padding: 17px 14px 0 8px;
  border: 2px solid #b4b4b4;
}
.viz-title h2 {
  color: #333;
  font-size: 37px;
  line-height: 40px;
}
.table-area {
  flex: 1;
  min-height: 0;
  padding: 8px 0 0 8px;
}
table {
  width: 641px;
  height: 100%;
  border-spacing: 0;
  border-bottom: 2px solid #c8c8c8;
  color: #333;
  font-size: 25px;
  line-height: 32px;
  table-layout: fixed;
}
.month-col {
  width: 162px;
}
th,
td {
  padding: 0;
  font-weight: 400;
}
thead th {
  height: 82px;
  padding: 0 0 2px 13px;
  border-bottom: 2px solid #c8c8c8;
  font-size: 22px;
  text-align: left;
  vertical-align: bottom;
  white-space: nowrap;
}
thead b {
  font-size: 23px;
  font-weight: 600;
}
tbody tr {
  height: 52px;
}
.month-head,
.month {
  border-right: 2px solid #c8c8c8;
}
.month-head {
  overflow: hidden;
}
thead .num {
  padding-right: 10px;
  padding-left: 0;
  text-align: right;
}
thead .last,
td.last {
  padding-right: 8px;
  border-right: 2px solid #c8c8c8;
}
.year {
  padding: 8px 0 0 13px;
  font-size: 24px;
  font-weight: 700;
  text-align: left;
  vertical-align: top;
}
.month {
  padding-left: 13px;
  color: #6b6b6b;
  font-size: 24px;
  text-align: left;
}
td {
  padding-right: 10px;
  text-align: right;
}
.striped .month,
.striped td {
  background: #f4f4f4;
}
.total .month,
.total td {
  border-top: 2px solid #d0d0d0;
}
.total .month {
  font-size: 22px;
}
.total td {
  font-weight: 700;
}
tbody + tbody tr:first-child > * {
  border-top: 2px solid #c8c8c8;
}

/* sheet tabs and status bar */
.sheet-tabs {
  display: flex;
  flex: none;
  height: 62px;
  border-top: 1px solid #c8c8c8;
  border-bottom: 2px solid #d0d0d0;
  background: #e5e5e5;
  color: #666;
}
.sheet {
  padding: 0 15px 2px 12px;
  border-right: 2px solid #cbcbcb;
  white-space: nowrap;
}
.source-tab {
  display: flex;
  gap: 12px;
  align-items: center;
  width: 260px;
  padding-left: 18px;
}
.open {
  background: #fafafa;
}
.status {
  display: flex;
  flex: none;
  gap: 30px;
  align-items: center;
  height: 40px;
  padding-left: 22px;
  background: #ebebeb;
  color: #000;
  font-size: 20px;
}
.stat {
  white-space: pre;
}
.status-cells {
  display: flex;
  align-self: stretch;
  margin-left: auto;
}
.cell {
  width: 54px;
  border-left: 2px solid #cbcbcb;
}
.cell.wide {
  width: 254px;
}
.cell.medium {
  width: 94px;
}
.pager {
  display: flex;
  gap: 18px;
  padding-left: 15px;
}
.cell.pager {
  width: 142px;
}
.views {
  display: flex;
  gap: 20px;
  padding-left: 17px;
}
.cell.views {
  width: 153px;
}
</style>
